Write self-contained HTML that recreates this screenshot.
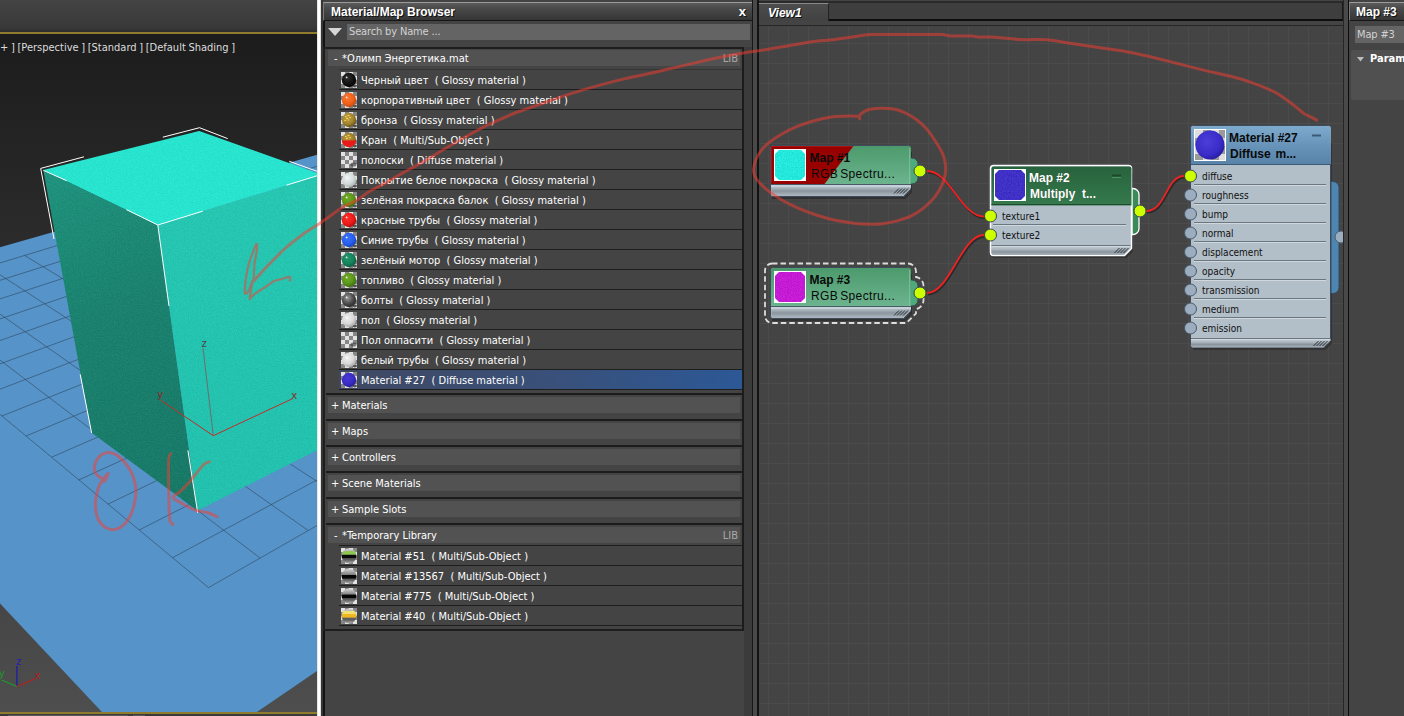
<!DOCTYPE html><html><head><meta charset="utf-8"><title>Material Editor</title><style>
html,body{margin:0;padding:0}
body{width:1404px;height:716px;overflow:hidden;background:#444;position:relative;font-family:'DejaVu Sans Condensed','Liberation Sans',sans-serif; font-size:11px;color:#fff}
div,span{box-sizing:border-box}
.abs{position:absolute}
.vtop{position:absolute;left:0;top:0;width:317px;height:32px;background:linear-gradient(#444 0,#3c3c3c 60%,#383838 88%,#2c2c2c 100%)}
.gold{position:absolute;left:0;width:317px;height:2px;background:#8f7a2e}
.vlab{position:absolute;left:0px;top:41px;white-space:pre;color:#dcdcdc;font-size:11px;line-height:14px;word-spacing:-0.5px}
.wbar{position:absolute;left:317px;top:0;width:4px;height:716px;background:linear-gradient(90deg,#d8d4cc,#fff 30%,#fff 70%,#cfcbc3)}
.bp{position:absolute;left:321px;top:0;width:436px;height:716px;background:#444}
.tb{position:absolute;height:20px;background:linear-gradient(#5c5c5c,#4a4a4a 30%,#363636 100%);border-top:1px solid #9a9a9a;border-left:1px solid #777;border-bottom:1px solid #161616;border-right:1px solid #222}
.tt{position:absolute;top:2px;font:bold 12px 'Liberation Sans',sans-serif;color:#fff;text-shadow:1px 1px 0 #111;white-space:pre}
.cx{position:absolute;right:6px;top:1px;font:bold 13px 'Liberation Sans',sans-serif;color:#fff;text-shadow:1px 1px 0 #111}
.sf{position:absolute;background:#646464;color:#d2d2d2;font-size:11px;line-height:15px}
.sf span{position:absolute;left:2px;top:0;white-space:pre;letter-spacing:-0.15px}
.lb{position:absolute;border:2px solid #1e1e1e;border-right-width:2px;background:#444}
.hd{position:absolute;left:7px;width:412px;height:16px;background:#525252;font-size:11px;line-height:17px}
.hd .pm{position:absolute;top:0}
.hd .ht{position:absolute;left:14px;top:0;white-space:pre}
.hd .lib{position:absolute;right:2px;top:0px;color:#a8a8a8;font-size:11px}
.rw{position:absolute;left:18px;width:403px;height:20px;border-top:1px solid #1e1e1e;line-height:19px}
.rw .ic{position:absolute;left:2px;top:2px}
.rw .rt{position:absolute;left:22px;top:1px;white-space:pre;font-size:11px}
.rw.r0{border-top-color:#353535}
.rw.sel{background:linear-gradient(90deg,#3f4862 0,#3a5078 50%,#2c5896 100%)}
.ln{position:absolute;left:18px;width:403px;height:1px;background:#1e1e1e}
.sl{position:absolute;left:5px;width:417px;height:2px;background:#1c1c1c}
</style></head><body>
<div class="vtop"></div><div class="gold" style="top:32px"></div>
<svg class="vp" width="317" height="678" viewBox="0 34 317 678" style="position:absolute;left:0;top:34px">
<defs><linearGradient id="bgg" x1="0" y1="0" x2="0" y2="1"><stop offset="0" stop-color="#1c1c1c"/><stop offset="1" stop-color="#4e4e4e"/></linearGradient>
<linearGradient id="lf" gradientUnits="userSpaceOnUse" x1="60" y1="180" x2="170" y2="480"><stop offset="0" stop-color="#1c937d"/><stop offset="0.4" stop-color="#17836f"/><stop offset="1" stop-color="#147a67"/></linearGradient>
<linearGradient id="rf" x1="0" y1="0" x2="0" y2="1"><stop offset="0" stop-color="#23cab4"/><stop offset="1" stop-color="#1fc4b0"/></linearGradient>
<filter id="nz" x="0" y="0" width="100%" height="100%" color-interpolation-filters="sRGB"><feTurbulence type="fractalNoise" baseFrequency="0.75" numOctaves="2" seed="7"/><feColorMatrix type="matrix" values="1.3 1.3 1.3 0 -1.45  1.3 1.3 1.3 0 -1.45  1.3 1.3 1.3 0 -1.45  0 0 0 0 1"/></filter>
<clipPath id="bx"><polygon points="43.3,170.1 199.2,131 321.6,174.6 345,436.2 197.5,510.6 91.3,432.4"/></clipPath>
<clipPath id="fl"><polygon points="0,247.2 52.5,232.3 290,162.5 317,154.8 330,150 330,662 256.2,712.5 102.4,712.5 0,603.5"/></clipPath></defs>
<rect x="0" y="34" width="317" height="678" fill="url(#bgg)"/>
<polygon points="0,247.2 52.5,232.3 290,162.5 317,154.8 330,150 330,662 256.2,712.5 102.4,712.5 0,603.5" fill="#5593c8"/>
<path d="M208.6 587.6L702.3 304.9M172.6 557.7L666.3 291.8M139.2 530L632.1 279.3M108 504.1L599.4 267.4M78.9 479.9L568.2 256.1M51.6 457.2L538.4 245.2M26 436L509.9 234.8M1.9 416L482.5 224.9M-20.8 397.1L456.3 215.4M-42.2 379.3L431.2 206.2M-62.4 362.5L407.1 197.4M-81.6 346.6L383.9 189M-99.8 331.5L361.6 180.9M-117 317.2L340.1 173.1M-133.4 303.6L319.4 165.6M208.6 587.6L-133.4 303.6M260.1 558L-91.2 290.7M308.2 530.5L-50.8 278.4M353 504.9L-12.3 266.7M395 480.8L24.5 255.4M434.3 458.3L59.7 244.7M471.3 437.1L93.4 234.4M506.1 417.2L125.8 224.6M538.9 398.4L156.8 215.1M569.9 380.7L186.6 206M599.2 363.9L215.2 197.3M627 348L242.8 188.9M653.4 332.9L269.3 180.8M678.4 318.5L294.8 173.1M702.3 304.9L319.4 165.6" stroke="#2c4258" stroke-opacity="0.7" stroke-width="0.8" fill="none" clip-path="url(#fl)"/>
<polygon points="43.3,170.1 157.8,225 197.5,510.6 91.3,432.4" fill="url(#lf)"/>
<polygon points="157.8,225 321.6,174.6 345,436.2 197.5,510.6" fill="url(#rf)"/>
<polygon points="43.3,170.1 199.2,131 321.6,174.6 157.8,225" fill="#25e8d1"/>
<g clip-path="url(#bx)" opacity="0.045"><rect x="0" y="125" width="317" height="390" filter="url(#nz)"/></g>
<path d="M84 156.8L40.7 168.4L54 239M43.3 170.3L66.7 180.7M162.8 137.2L199.5 127.7L227.7 138.6M126.4 209.6L157.8 225L202.6 211.2M157.8 225L169 306M286.4 185.2L317 175.8M289.3 161.3L317 171.3M80.2 374.4L91.6 433M187.9 450.3L197.7 512.9" stroke="#fff" stroke-width="1" fill="none"/>
<path d="M213.3 435.7L203 348" stroke="#6d6d6d" stroke-width="1" fill="none"/>
<path d="M160.8 400.3L213.3 435.7L292.2 398.8" stroke="#c22d28" stroke-width="1" fill="none"/>
<text x="201.5" y="347" font-size="11" fill="#4a4545" font-family="'Liberation Sans',sans-serif">z</text>
<text x="291.5" y="399" font-size="11" fill="#8a2828" font-family="'Liberation Sans',sans-serif">x</text>
<text x="157.5" y="398" font-size="11" fill="#8a2828" font-family="'Liberation Sans',sans-serif">y</text>
<path d="M16.9 686.5L16.9 666" stroke="#1c1ca8" stroke-width="1.3" fill="none"/>
<path d="M16.9 686.5L35.5 678.5" stroke="#b82020" stroke-width="1.3" fill="none"/>
<path d="M16.9 686.5L1.5 680" stroke="#1e9a2a" stroke-width="1.3" fill="none"/>
<text x="16" y="665" font-size="11" fill="#2222b0" font-family="'Liberation Sans',sans-serif">z</text>
<text x="34.5" y="679" font-size="11" fill="#b02020" font-family="'Liberation Sans',sans-serif">x</text>
<text x="-1" y="677" font-size="11" fill="#1e9a2a" font-family="'Liberation Sans',sans-serif">y</text>
</svg>
<div class="vlab">+ ] [Perspective ] [Standard ] [Default Shading ]</div>
<div class="gold" style="top:712px"></div>
<div class="abs" style="left:0;top:714px;width:317px;height:2px;background:#3a3a3a"></div><div class="abs" style="left:8px;top:715px;width:120px;height:1px;background:#5a5a5a"></div><div class="abs" style="left:133px;top:715px;width:12px;height:1px;background:#5a5a5a"></div>
<div class="wbar"></div>
<div class="bp">
<div class="tb" style="left:2px;top:2px;width:430px;height:19px"><span class="tt" style="left:7px">Material/Map Browser</span><span class="cx">x</span></div>
<svg style="position:absolute;left:7px;top:28px" width="14" height="8"><path d="M0 0h14l-7 8z" fill="#d6d6d6"/></svg>
<div class="sf" style="left:26px;top:24px;width:403px;height:16px"><span>Search by Name ...</span></div>
<div class="abs" style="left:0;top:0;width:2px;height:716px;background:#363636"></div><div class="abs" style="left:2px;top:21px;width:2px;height:695px;background:#141414"></div><div class="lb" style="left:2px;top:47px;width:422px;height:584px"></div>
<div class="hd" style="top:50px"><span class="pm" style="left:6px">-</span><span class="ht">*Олимп Энергетика.mat</span><span class="lib">LIB</span></div>
<div class="rw r0" style="top:69px"><svg class="ic" width="16" height="16" viewBox="0 0 16 16"><rect width="16" height="16" fill="#868686"/><path d="M0 0h4v4h-4zM8 0h4v4h-4zM4 4h4v4h-4zM12 4h4v4h-4zM0 8h4v4h-4zM8 8h4v4h-4zM4 12h4v4h-4zM12 12h4v4h-4z" fill="#e2e2e2"/><ellipse cx="13.8" cy="14" rx="2.2" ry="1.4" fill="#1a1a1a" fill-opacity="0.7"/><defs><radialGradient id="g0" cx="0.4" cy="0.36" r="0.68"><stop offset="0" stop-color="#2e2e2e"/><stop offset="0.6" stop-color="#121212"/><stop offset="1" stop-color="#040404"/></radialGradient></defs><circle cx="8" cy="8" r="7.2" fill="url(#g0)"/><circle cx="5.6" cy="5.4" r="0.9" fill="#fff" fill-opacity="0.9"/></svg><span class="rt">Черный цвет  ( Glossy material )</span></div>
<div class="rw" style="top:89px"><svg class="ic" width="16" height="16" viewBox="0 0 16 16"><rect width="16" height="16" fill="#868686"/><path d="M0 0h4v4h-4zM8 0h4v4h-4zM4 4h4v4h-4zM12 4h4v4h-4zM0 8h4v4h-4zM8 8h4v4h-4zM4 12h4v4h-4zM12 12h4v4h-4z" fill="#e2e2e2"/><ellipse cx="13.8" cy="14" rx="2.2" ry="1.4" fill="#1a1a1a" fill-opacity="0.7"/><defs><radialGradient id="g1" cx="0.4" cy="0.36" r="0.68"><stop offset="0" stop-color="#fa7a30"/><stop offset="0.6" stop-color="#f0601c"/><stop offset="1" stop-color="#c04810"/></radialGradient></defs><circle cx="8" cy="8" r="7.2" fill="url(#g1)"/><circle cx="5.6" cy="5.4" r="0.9" fill="#fff" fill-opacity="0.9"/></svg><span class="rt">корпоративный цвет  ( Glossy material )</span></div>
<div class="rw" style="top:109px"><svg class="ic" width="16" height="16" viewBox="0 0 16 16"><rect width="16" height="16" fill="#868686"/><path d="M0 0h4v4h-4zM8 0h4v4h-4zM4 4h4v4h-4zM12 4h4v4h-4zM0 8h4v4h-4zM8 8h4v4h-4zM4 12h4v4h-4zM12 12h4v4h-4z" fill="#e2e2e2"/><ellipse cx="13.8" cy="14" rx="2.2" ry="1.4" fill="#1a1a1a" fill-opacity="0.7"/><defs><radialGradient id="g2" cx="0.4" cy="0.36" r="0.7"><stop offset="0" stop-color="#c8a440"/><stop offset="0.6" stop-color="#a08430"/><stop offset="1" stop-color="#5e4a16"/></radialGradient></defs><circle cx="8" cy="8" r="7.2" fill="url(#g2)"/><path d="M4 4.500h1.500M6.500 3.500h2M5 6.500h2M8.500 5.500h1.500M3.500 8.500h1.500M7 8h1" stroke="#f0d860" stroke-width="1"/></svg><span class="rt">бронза  ( Glossy material )</span></div>
<div class="rw" style="top:129px"><svg class="ic" width="16" height="16" viewBox="0 0 16 16"><rect width="16" height="16" fill="#868686"/><path d="M0 0h4v4h-4zM8 0h4v4h-4zM4 4h4v4h-4zM12 4h4v4h-4zM0 8h4v4h-4zM8 8h4v4h-4zM4 12h4v4h-4zM12 12h4v4h-4z" fill="#e2e2e2"/><ellipse cx="13.8" cy="14" rx="2.2" ry="1.4" fill="#1a1a1a" fill-opacity="0.7"/><defs><radialGradient id="g3" cx="0.4" cy="0.36" r="0.7"><stop offset="0" stop-color="#c9a23c"/><stop offset="1" stop-color="#7b6120"/></radialGradient><clipPath id="g3c"><circle cx="8" cy="8" r="7.2"/></clipPath></defs><circle cx="8" cy="8" r="7.2" fill="url(#g3)"/><rect x="0" y="8.4" width="16" height="8" fill="#e81a1a" clip-path="url(#g3c)"/><path d="M4 4.500h1.500M6.500 3.500h2M5 6.500h1.500M8.500 5.500h1.500" stroke="#f0d860" stroke-width="1"/></svg><span class="rt">Кран  ( Multi/Sub-Object )</span></div>
<div class="rw" style="top:149px"><svg class="ic" width="16" height="16" viewBox="0 0 16 16"><rect width="16" height="16" fill="#868686"/><path d="M0 0h4v4h-4zM8 0h4v4h-4zM4 4h4v4h-4zM12 4h4v4h-4zM0 8h4v4h-4zM8 8h4v4h-4zM4 12h4v4h-4zM12 12h4v4h-4z" fill="#e2e2e2"/><ellipse cx="12.500" cy="12.500" rx="3" ry="2" fill="#333" fill-opacity="0.6"/></svg><span class="rt">полоски  ( Diffuse material )</span></div>
<div class="rw" style="top:169px"><svg class="ic" width="16" height="16" viewBox="0 0 16 16"><rect width="16" height="16" fill="#868686"/><path d="M0 0h4v4h-4zM8 0h4v4h-4zM4 4h4v4h-4zM12 4h4v4h-4zM0 8h4v4h-4zM8 8h4v4h-4zM4 12h4v4h-4zM12 12h4v4h-4z" fill="#e2e2e2"/><ellipse cx="13.8" cy="14" rx="2.2" ry="1.4" fill="#1a1a1a" fill-opacity="0.7"/><defs><radialGradient id="g5" cx="0.4" cy="0.36" r="0.68"><stop offset="0" stop-color="#eef2f2"/><stop offset="0.6" stop-color="#d4dada"/><stop offset="1" stop-color="#a8b0b0"/></radialGradient></defs><circle cx="8" cy="8" r="7.2" fill="url(#g5)"/><circle cx="5.6" cy="5.4" r="0.9" fill="#fff" fill-opacity="0.9"/></svg><span class="rt">Покрытие белое покраска  ( Glossy material )</span></div>
<div class="rw" style="top:189px"><svg class="ic" width="16" height="16" viewBox="0 0 16 16"><rect width="16" height="16" fill="#868686"/><path d="M0 0h4v4h-4zM8 0h4v4h-4zM4 4h4v4h-4zM12 4h4v4h-4zM0 8h4v4h-4zM8 8h4v4h-4zM4 12h4v4h-4zM12 12h4v4h-4z" fill="#e2e2e2"/><ellipse cx="13.8" cy="14" rx="2.2" ry="1.4" fill="#1a1a1a" fill-opacity="0.7"/><defs><radialGradient id="g6" cx="0.4" cy="0.36" r="0.68"><stop offset="0" stop-color="#74ac28"/><stop offset="0.6" stop-color="#5a961a"/><stop offset="1" stop-color="#3a6a0c"/></radialGradient></defs><circle cx="8" cy="8" r="7.2" fill="url(#g6)"/><circle cx="5.6" cy="5.4" r="0.9" fill="#fff" fill-opacity="0.9"/></svg><span class="rt">зелёная покраска балок  ( Glossy material )</span></div>
<div class="rw" style="top:209px"><svg class="ic" width="16" height="16" viewBox="0 0 16 16"><rect width="16" height="16" fill="#868686"/><path d="M0 0h4v4h-4zM8 0h4v4h-4zM4 4h4v4h-4zM12 4h4v4h-4zM0 8h4v4h-4zM8 8h4v4h-4zM4 12h4v4h-4zM12 12h4v4h-4z" fill="#e2e2e2"/><ellipse cx="13.8" cy="14" rx="2.2" ry="1.4" fill="#1a1a1a" fill-opacity="0.7"/><defs><radialGradient id="g7" cx="0.4" cy="0.36" r="0.68"><stop offset="0" stop-color="#fa3228"/><stop offset="0.6" stop-color="#ee1a1a"/><stop offset="1" stop-color="#b00a0a"/></radialGradient></defs><circle cx="8" cy="8" r="7.2" fill="url(#g7)"/><circle cx="5.6" cy="5.4" r="0.9" fill="#fff" fill-opacity="0.9"/></svg><span class="rt">красные трубы  ( Glossy material )</span></div>
<div class="rw" style="top:229px"><svg class="ic" width="16" height="16" viewBox="0 0 16 16"><rect width="16" height="16" fill="#868686"/><path d="M0 0h4v4h-4zM8 0h4v4h-4zM4 4h4v4h-4zM12 4h4v4h-4zM0 8h4v4h-4zM8 8h4v4h-4zM4 12h4v4h-4zM12 12h4v4h-4z" fill="#e2e2e2"/><ellipse cx="13.8" cy="14" rx="2.2" ry="1.4" fill="#1a1a1a" fill-opacity="0.7"/><defs><radialGradient id="g8" cx="0.4" cy="0.36" r="0.68"><stop offset="0" stop-color="#3a72fa"/><stop offset="0.6" stop-color="#2860ee"/><stop offset="1" stop-color="#1640b8"/></radialGradient></defs><circle cx="8" cy="8" r="7.2" fill="url(#g8)"/><circle cx="5.6" cy="5.4" r="0.9" fill="#fff" fill-opacity="0.9"/></svg><span class="rt">Синие трубы  ( Glossy material )</span></div>
<div class="rw" style="top:249px"><svg class="ic" width="16" height="16" viewBox="0 0 16 16"><rect width="16" height="16" fill="#868686"/><path d="M0 0h4v4h-4zM8 0h4v4h-4zM4 4h4v4h-4zM12 4h4v4h-4zM0 8h4v4h-4zM8 8h4v4h-4zM4 12h4v4h-4zM12 12h4v4h-4z" fill="#e2e2e2"/><ellipse cx="13.8" cy="14" rx="2.2" ry="1.4" fill="#1a1a1a" fill-opacity="0.7"/><defs><radialGradient id="g9" cx="0.4" cy="0.36" r="0.68"><stop offset="0" stop-color="#24966c"/><stop offset="0.6" stop-color="#16845c"/><stop offset="1" stop-color="#0a5a3c"/></radialGradient></defs><circle cx="8" cy="8" r="7.2" fill="url(#g9)"/><circle cx="5.6" cy="5.4" r="0.9" fill="#fff" fill-opacity="0.9"/></svg><span class="rt">зелёный мотор  ( Glossy material )</span></div>
<div class="rw" style="top:269px"><svg class="ic" width="16" height="16" viewBox="0 0 16 16"><rect width="16" height="16" fill="#868686"/><path d="M0 0h4v4h-4zM8 0h4v4h-4zM4 4h4v4h-4zM12 4h4v4h-4zM0 8h4v4h-4zM8 8h4v4h-4zM4 12h4v4h-4zM12 12h4v4h-4z" fill="#e2e2e2"/><ellipse cx="13.8" cy="14" rx="2.2" ry="1.4" fill="#1a1a1a" fill-opacity="0.7"/><defs><radialGradient id="g10" cx="0.4" cy="0.36" r="0.68"><stop offset="0" stop-color="#74ac28"/><stop offset="0.6" stop-color="#5a961a"/><stop offset="1" stop-color="#3a6a0c"/></radialGradient></defs><circle cx="8" cy="8" r="7.2" fill="url(#g10)"/><circle cx="5.6" cy="5.4" r="0.9" fill="#fff" fill-opacity="0.9"/></svg><span class="rt">топливо  ( Glossy material )</span></div>
<div class="rw" style="top:289px"><svg class="ic" width="16" height="16" viewBox="0 0 16 16"><rect width="16" height="16" fill="#868686"/><path d="M0 0h4v4h-4zM8 0h4v4h-4zM4 4h4v4h-4zM12 4h4v4h-4zM0 8h4v4h-4zM8 8h4v4h-4zM4 12h4v4h-4zM12 12h4v4h-4z" fill="#e2e2e2"/><ellipse cx="13.8" cy="14" rx="2.2" ry="1.4" fill="#1a1a1a" fill-opacity="0.7"/><defs><radialGradient id="g11" cx="0.4" cy="0.36" r="0.68"><stop offset="0" stop-color="#9a9a9a"/><stop offset="0.6" stop-color="#4a4a4a"/><stop offset="1" stop-color="#2a2a2a"/></radialGradient></defs><circle cx="8" cy="8" r="7.2" fill="url(#g11)"/><circle cx="5.6" cy="5.4" r="0.9" fill="#fff" fill-opacity="0.9"/></svg><span class="rt">болты  ( Glossy material )</span></div>
<div class="rw" style="top:309px"><svg class="ic" width="16" height="16" viewBox="0 0 16 16"><rect width="16" height="16" fill="#868686"/><path d="M0 0h4v4h-4zM8 0h4v4h-4zM4 4h4v4h-4zM12 4h4v4h-4zM0 8h4v4h-4zM8 8h4v4h-4zM4 12h4v4h-4zM12 12h4v4h-4z" fill="#e2e2e2"/><ellipse cx="13.8" cy="14" rx="2.2" ry="1.4" fill="#1a1a1a" fill-opacity="0.7"/><defs><radialGradient id="g12" cx="0.4" cy="0.36" r="0.68"><stop offset="0" stop-color="#f0f0f0"/><stop offset="0.6" stop-color="#d8d8d8"/><stop offset="1" stop-color="#a4a4a4"/></radialGradient></defs><circle cx="8" cy="8" r="7.2" fill="url(#g12)"/><circle cx="5.6" cy="5.4" r="0.9" fill="#fff" fill-opacity="0.9"/></svg><span class="rt">пол  ( Glossy material )</span></div>
<div class="rw" style="top:329px"><svg class="ic" width="16" height="16" viewBox="0 0 16 16"><rect width="16" height="16" fill="#868686"/><path d="M0 0h4v4h-4zM8 0h4v4h-4zM4 4h4v4h-4zM12 4h4v4h-4zM0 8h4v4h-4zM8 8h4v4h-4zM4 12h4v4h-4zM12 12h4v4h-4z" fill="#e2e2e2"/><ellipse cx="12.500" cy="12.500" rx="3" ry="2" fill="#333" fill-opacity="0.6"/></svg><span class="rt">Пол оппасити  ( Glossy material )</span></div>
<div class="rw" style="top:349px"><svg class="ic" width="16" height="16" viewBox="0 0 16 16"><rect width="16" height="16" fill="#868686"/><path d="M0 0h4v4h-4zM8 0h4v4h-4zM4 4h4v4h-4zM12 4h4v4h-4zM0 8h4v4h-4zM8 8h4v4h-4zM4 12h4v4h-4zM12 12h4v4h-4z" fill="#e2e2e2"/><ellipse cx="13.8" cy="14" rx="2.2" ry="1.4" fill="#1a1a1a" fill-opacity="0.7"/><defs><radialGradient id="g14" cx="0.4" cy="0.36" r="0.68"><stop offset="0" stop-color="#f0f0f0"/><stop offset="0.6" stop-color="#d8d8d8"/><stop offset="1" stop-color="#a4a4a4"/></radialGradient></defs><circle cx="8" cy="8" r="7.2" fill="url(#g14)"/><circle cx="5.6" cy="5.4" r="0.9" fill="#fff" fill-opacity="0.9"/></svg><span class="rt">белый трубы  ( Glossy material )</span></div>
<div class="rw sel" style="top:369px"><svg class="ic" width="16" height="16" viewBox="0 0 16 16"><rect width="16" height="16" fill="#868686"/><path d="M0 0h4v4h-4zM8 0h4v4h-4zM4 4h4v4h-4zM12 4h4v4h-4zM0 8h4v4h-4zM8 8h4v4h-4zM4 12h4v4h-4zM12 12h4v4h-4z" fill="#e2e2e2"/><ellipse cx="13.8" cy="14" rx="2.2" ry="1.4" fill="#1a1a1a" fill-opacity="0.7"/><defs><radialGradient id="g15" cx="0.4" cy="0.36" r="0.68"><stop offset="0" stop-color="#4a3ad4"/><stop offset="0.6" stop-color="#3a2cc4"/><stop offset="1" stop-color="#281c9c"/></radialGradient></defs><circle cx="8" cy="8" r="7.2" fill="url(#g15)"/></svg><span class="rt">Material #27  ( Diffuse material )</span></div>
<div class="ln" style="top:389px"></div>
<div class="sl" style="top:393px"></div>
<div class="hd" style="top:397px"><span class="pm" style="left:3px">+</span><span class="ht">Materials</span></div>
<div class="sl" style="top:419px"></div>
<div class="hd" style="top:423px"><span class="pm" style="left:3px">+</span><span class="ht">Maps</span></div>
<div class="sl" style="top:445px"></div>
<div class="hd" style="top:449px"><span class="pm" style="left:3px">+</span><span class="ht">Controllers</span></div>
<div class="sl" style="top:471px"></div>
<div class="hd" style="top:475px"><span class="pm" style="left:3px">+</span><span class="ht">Scene Materials</span></div>
<div class="sl" style="top:497px"></div>
<div class="hd" style="top:501px"><span class="pm" style="left:3px">+</span><span class="ht">Sample Slots</span></div>
<div class="sl" style="top:523px"></div>
<div class="hd" style="top:527px"><span class="pm" style="left:6px">-</span><span class="ht">*Temporary Library</span><span class="lib">LIB</span></div>
<div class="rw" style="top:545px"><svg class="ic" width="16" height="16" viewBox="0 0 16 16"><rect width="16" height="16" fill="#868686"/><path d="M0 0h4v4h-4zM8 0h4v4h-4zM4 4h4v4h-4zM12 4h4v4h-4zM0 8h4v4h-4zM8 8h4v4h-4zM4 12h4v4h-4zM12 12h4v4h-4z" fill="#e2e2e2"/><defs><linearGradient id="g16" x1="0" y1="0" x2="0" y2="1"><stop offset="0" stop-color="#d8d8d8"/><stop offset="0.5" stop-color="#6a6a6a"/><stop offset="0.75" stop-color="#5a5a5a"/><stop offset="1" stop-color="#b0b0b0"/></linearGradient><clipPath id="g16c"><circle cx="8" cy="8" r="7.4"/></clipPath></defs><circle cx="8" cy="8" r="7.4" fill="url(#g16)"/><g clip-path="url(#g16c)"><rect x="0" y="3.2" width="16" height="3.6" fill="#8cc850"/><rect x="0" y="6.8" width="16" height="3.4" fill="#0a0a0a"/></g></svg><span class="rt">Material #51  ( Multi/Sub-Object )</span></div>
<div class="rw" style="top:565px"><svg class="ic" width="16" height="16" viewBox="0 0 16 16"><rect width="16" height="16" fill="#868686"/><path d="M0 0h4v4h-4zM8 0h4v4h-4zM4 4h4v4h-4zM12 4h4v4h-4zM0 8h4v4h-4zM8 8h4v4h-4zM4 12h4v4h-4zM12 12h4v4h-4z" fill="#e2e2e2"/><defs><linearGradient id="g17" x1="0" y1="0" x2="0" y2="1"><stop offset="0" stop-color="#d8d8d8"/><stop offset="0.5" stop-color="#6a6a6a"/><stop offset="0.75" stop-color="#5a5a5a"/><stop offset="1" stop-color="#b0b0b0"/></linearGradient><clipPath id="g17c"><circle cx="8" cy="8" r="7.4"/></clipPath></defs><circle cx="8" cy="8" r="7.4" fill="url(#g17)"/><g clip-path="url(#g17c)"><rect x="0" y="7" width="16" height="3.6" fill="#050505"/></g></svg><span class="rt">Material #13567  ( Multi/Sub-Object )</span></div>
<div class="rw" style="top:585px"><svg class="ic" width="16" height="16" viewBox="0 0 16 16"><rect width="16" height="16" fill="#868686"/><path d="M0 0h4v4h-4zM8 0h4v4h-4zM4 4h4v4h-4zM12 4h4v4h-4zM0 8h4v4h-4zM8 8h4v4h-4zM4 12h4v4h-4zM12 12h4v4h-4z" fill="#e2e2e2"/><defs><linearGradient id="g18" x1="0" y1="0" x2="0" y2="1"><stop offset="0" stop-color="#d8d8d8"/><stop offset="0.5" stop-color="#6a6a6a"/><stop offset="0.75" stop-color="#5a5a5a"/><stop offset="1" stop-color="#b0b0b0"/></linearGradient><clipPath id="g18c"><circle cx="8" cy="8" r="7.4"/></clipPath></defs><circle cx="8" cy="8" r="7.4" fill="url(#g18)"/><g clip-path="url(#g18c)"><rect x="0" y="6.6" width="16" height="3.6" fill="#050505"/></g></svg><span class="rt">Material #775  ( Multi/Sub-Object )</span></div>
<div class="rw" style="top:605px"><svg class="ic" width="16" height="16" viewBox="0 0 16 16"><rect width="16" height="16" fill="#868686"/><path d="M0 0h4v4h-4zM8 0h4v4h-4zM4 4h4v4h-4zM12 4h4v4h-4zM0 8h4v4h-4zM8 8h4v4h-4zM4 12h4v4h-4zM12 12h4v4h-4z" fill="#e2e2e2"/><defs><linearGradient id="g19" x1="0" y1="0" x2="0" y2="1"><stop offset="0" stop-color="#d8d8d8"/><stop offset="0.5" stop-color="#6a6a6a"/><stop offset="0.75" stop-color="#5a5a5a"/><stop offset="1" stop-color="#b0b0b0"/></linearGradient><clipPath id="g19c"><circle cx="8" cy="8" r="7.4"/></clipPath></defs><circle cx="8" cy="8" r="7.4" fill="url(#g19)"/><g clip-path="url(#g19c)"><rect x="0" y="3" width="16" height="3" fill="#f2e070"/><rect x="0" y="6" width="16" height="3.6" fill="#f0b820"/></g></svg><span class="rt">Material #40  ( Multi/Sub-Object )</span></div>
<div class="ln" style="top:625px"></div>
</div>
<div class="abs" style="left:742px;top:47px;width:2px;height:583px;background:#1c1c1c"></div>
<div class="abs" style="left:744px;top:47px;width:8px;height:669px;background:#3b3b3b"></div>
<div class="abs" style="left:752px;top:0;width:1px;height:716px;background:#161616"></div>
<div class="abs" style="left:753px;top:0;width:4px;height:716px;background:#494949"></div>
<div class="abs" style="left:757px;top:0;width:2px;height:716px;background:#121212"></div>
<div class="abs" style="left:759px;top:0;width:584px;height:26px;background:#444"></div>
<div class="abs" style="left:759px;top:2px;width:584px;height:20px;background:#3e3e3e;border-top:2px solid #2a2a2a;border-right:1px solid #1a1a1a;border-bottom:2px solid #0e0e0e;margin-top:-1px"></div>
<div class="abs" style="left:759px;top:3px;width:70px;height:18px;background:linear-gradient(#4c4c4c,#424242);border-top:1px solid #8a8a8a;border-right:1px solid #222"><span style="position:absolute;left:9px;top:2px;font:italic bold 12px 'Liberation Sans',sans-serif;color:#fff;text-shadow:1px 1px 0 #111">View1</span></div>
<div class="abs" style="left:759px;top:25px;width:584px;height:1px;background:#262626"></div>
<svg style="position:absolute;left:757px;top:0" width="591" height="716" viewBox="757 0 591 716">
<defs><linearGradient id="gh" x1="0" y1="0" x2="0" y2="1"><stop offset="0" stop-color="#4c9a6c"/><stop offset="1" stop-color="#6cb48e"/></linearGradient><linearGradient id="gf" x1="0" y1="0" x2="0" y2="1"><stop offset="0" stop-color="#bcc8d0"/><stop offset="0.3" stop-color="#aab4bc"/><stop offset="0.6" stop-color="#8a949c"/><stop offset="1" stop-color="#a8b2ba"/></linearGradient><linearGradient id="gd" x1="0" y1="0" x2="0" y2="1"><stop offset="0" stop-color="#27623c"/><stop offset="1" stop-color="#367a4e"/></linearGradient><linearGradient id="gb" x1="0" y1="0" x2="0" y2="1"><stop offset="0" stop-color="#7eaacc"/><stop offset="0.5" stop-color="#6894ba"/><stop offset="1" stop-color="#5882a8"/></linearGradient><radialGradient id="gs" cx="0.4" cy="0.38" r="0.65"><stop offset="0" stop-color="#4c3ed8"/><stop offset="0.7" stop-color="#3a2cc8"/><stop offset="1" stop-color="#281ca2"/></radialGradient><filter id="nz2" x="0" y="0" width="100%" height="100%" color-interpolation-filters="sRGB"><feTurbulence type="fractalNoise" baseFrequency="0.8" numOctaves="2" seed="11"/><feColorMatrix type="matrix" values="1.3 1.3 1.3 0 -1.45  1.3 1.3 1.3 0 -1.45  1.3 1.3 1.3 0 -1.45  0 0 0 0 1"/></filter><pattern id="grid" x="768" y="3" width="20" height="20" patternUnits="userSpaceOnUse"><path d="M0.5 0v20M0 0.5h20" stroke="#4b4b4b" stroke-width="1" fill="none"/></pattern></defs>
<rect x="759" y="26" width="584" height="690" fill="#444"/>
<rect x="759" y="26" width="584" height="690" fill="url(#grid)"/>
<path d="M927 171C950 171 961 216.5 984 216.5" transform="translate(1,1.5)" stroke="#2a2a2a" stroke-width="2" fill="none"/>
<path d="M927 171C950 171 961 216.5 984 216.5" stroke="#ee2222" stroke-width="1.8" fill="none"/>
<path d="M927 293C950 293 961 235 984 235" transform="translate(1,1.5)" stroke="#2a2a2a" stroke-width="2" fill="none"/>
<path d="M927 293C950 293 961 235 984 235" stroke="#ee2222" stroke-width="1.8" fill="none"/>
<path d="M1146 211C1166 211 1166 176 1184 176" transform="translate(1,1.5)" stroke="#2a2a2a" stroke-width="2" fill="none"/>
<path d="M1146 211C1166 211 1166 176 1184 176" stroke="#ee2222" stroke-width="1.8" fill="none"/>
<path d="M772 198h133l6 -6v-40" stroke="#222" stroke-opacity="0.55" stroke-width="2" fill="none"/>
<path d="M910 158h2a6 6 0 0 1 6 6v14a6 6 0 0 1 -6 6h-2z" fill="#4eaa7a" stroke="#3a4a55" stroke-width="1"/>
<path d="M770.5 148.5a3 3 0 0 1 3 -3h134a3 3 0 0 1 3 3v41l-7 7h-131a2 2 0 0 1 -2 -2z" fill="#a9b4bd" stroke="#3d4b5a" stroke-width="1"/>
<path d="M771 148a2 2 0 0 1 2 -2h136a2 2 0 0 1 2 2v36h-140z" fill="url(#gh)"/>
<path d="M909.5 148v36" stroke="#86c4a0" stroke-opacity="0.7" stroke-width="1"/>
<polygon points="771,146 853.5,146 824.5,184 771,184" fill="#990000"/>
<path d="M771 146.5h82M771.5 146v37" stroke="#b01010" stroke-width="1" fill="none"/>
<path d="M771 184.5h140" stroke="#4a5a68" stroke-width="1"/>
<path d="M771 185h140v3l-7 7h-132z" fill="url(#gf)"/>
<path d="M771 186h140" stroke="#c6d0d8" stroke-width="2"/>
<path d="M908 188.5l-5 5M905 188.5l-5 5M902 188.5l-5 5M899 188.5l-5 5" stroke="#2a3036" stroke-width="1" fill="none"/>
<rect x="774" y="149" width="32" height="32" fill="#fff"/>
<polygon points="779,150 801,150 805,154 805,176 801,180 779,180 775,176 775,154" fill="#1ef0e2"/><clipPath id="oc5575"><polygon points="779,150 801,150 805,154 805,176 801,180 779,180 775,176 775,154"/></clipPath><rect x="775" y="150" width="30" height="30" filter="url(#nz2)" opacity="0.07" clip-path="url(#oc5575)"/>
<text x="809.5" y="161.5" font-size="12" font-weight="bold" fill="#0a0a0a" font-family="'Liberation Sans',sans-serif">Map #1</text>
<text x="811" y="177.5" font-size="12" fill="#0a0a0a" font-family="'Liberation Sans',sans-serif" letter-spacing="0.35" word-spacing="-1.5">RGB Spectru...</text>
<circle cx="920" cy="171" r="6" fill="#ccff00" stroke="#3a4652" stroke-width="1"/>
<path d="M772 263.5h136a8 8 0 0 1 8 8v5.5a9 9 0 0 1 7.5 9v14a9 9 0 0 1 -7.5 9v4.5l-9.5 9.500h-134.500a7 7 0 0 1 -7 -7v-45.500a7 7 0 0 1 7 -7z" stroke="#dcdcdc" stroke-width="1.8" stroke-dasharray="5.500 3" fill="none"/>
<path d="M772 320h133l6 -6v-40" stroke="#222" stroke-opacity="0.55" stroke-width="2" fill="none"/>
<path d="M910 280h2a6 6 0 0 1 6 6v14a6 6 0 0 1 -6 6h-2z" fill="#4eaa7a" stroke="#3a4a55" stroke-width="1"/>
<path d="M770.5 270.5a3 3 0 0 1 3 -3h134a3 3 0 0 1 3 3v41l-7 7h-131a2 2 0 0 1 -2 -2z" fill="#a9b4bd" stroke="#3d4b5a" stroke-width="1"/>
<path d="M771 270a2 2 0 0 1 2 -2h136a2 2 0 0 1 2 2v36h-140z" fill="url(#gh)"/>
<path d="M909.5 270v36" stroke="#86c4a0" stroke-opacity="0.7" stroke-width="1"/>
<path d="M771 306.5h140" stroke="#4a5a68" stroke-width="1"/>
<path d="M771 307h140v3l-7 7h-132z" fill="url(#gf)"/>
<path d="M771 308h140" stroke="#c6d0d8" stroke-width="2"/>
<path d="M908 310.5l-5 5M905 310.5l-5 5M902 310.5l-5 5M899 310.5l-5 5" stroke="#2a3036" stroke-width="1" fill="none"/>
<rect x="774" y="271" width="32" height="32" fill="#fff"/>
<polygon points="779,272 801,272 805,276 805,298 801,302 779,302 775,298 775,276" fill="#cc14dc"/><clipPath id="oc5697"><polygon points="779,272 801,272 805,276 805,298 801,302 779,302 775,298 775,276"/></clipPath><rect x="775" y="272" width="30" height="30" filter="url(#nz2)" opacity="0.07" clip-path="url(#oc5697)"/>
<text x="809.5" y="283.5" font-size="12" font-weight="bold" fill="#0a0a0a" font-family="'Liberation Sans',sans-serif">Map #3</text>
<text x="811" y="299.5" font-size="12" fill="#0a0a0a" font-family="'Liberation Sans',sans-serif" letter-spacing="0.35" word-spacing="-1.5">RGB Spectru...</text>
<circle cx="920" cy="293" r="6" fill="#ccff00" stroke="#3a4652" stroke-width="1"/>
<path d="M993 257h133l6 -6v-78" stroke="#222" stroke-opacity="0.5" stroke-width="2" fill="none"/>
<path d="M1132 188.500h1a6 6 0 0 1 6 6v34a6 6 0 0 1 -6 6h-1z" fill="#3a8a5a" stroke="#fff" stroke-width="1.3"/>
<path d="M990.5 168.5a3 3 0 0 1 3 -3h135a3 3 0 0 1 3 3v80l-7 7h-131a3 3 0 0 1 -3 -3z" fill="#b2bec8" stroke="#fff" stroke-width="1.5"/>
<path d="M991.5 168.5a2 2 0 0 1 2 -2h136a2 2 0 0 1 2 2v37h-140z" fill="url(#gd)"/>
<path d="M991.500 204.500h139" stroke="#1e4a2e" stroke-width="1"/>
<path d="M993 224.5h133" stroke="#6a7680" stroke-width="1"/><path d="M993 225.5h133" stroke="#d0d8de" stroke-width="1"/>
<path d="M991.5 245.5h139" stroke="#6a7680" stroke-width="1"/><path d="M991.5 246.5h139" stroke="#d0d8de" stroke-width="1"/>
<path d="M991.500 247h139v1l-7 7h-130a2 2 0 0 1 -2 -2z" fill="url(#gf)"/>
<path d="M1128.5 248l-5 5M1125.5 248l-5 5M1122.5 248l-5 5M1119.5 248l-5 5" stroke="#2a3036" stroke-width="1" fill="none"/>
<rect x="994" y="169" width="32" height="32" fill="#fff"/>
<polygon points="999,170 1021,170 1025,174 1025,196 1021,200 999,200 995,196 995,174" fill="#3c2ccc"/><clipPath id="oc7135"><polygon points="999,170 1021,170 1025,174 1025,196 1021,200 999,200 995,196 995,174"/></clipPath><rect x="995" y="170" width="30" height="30" filter="url(#nz2)" opacity="0.07" clip-path="url(#oc7135)"/>
<text x="1029.500" y="182" font-size="12" font-weight="bold" fill="#1a2a1e" fill-opacity="0.6" font-family="'Liberation Sans',sans-serif">Map #2</text>
<text x="1029" y="181.500" font-size="12" font-weight="bold" fill="#fff" font-family="'Liberation Sans',sans-serif">Map #2</text>
<text x="1030.500" y="198" font-size="12" font-weight="bold" fill="#1a2a1e" fill-opacity="0.6" font-family="'Liberation Sans',sans-serif" xml:space="preserve">Multiply  t...</text>
<text x="1030" y="197.500" font-size="12" font-weight="bold" fill="#fff" font-family="'Liberation Sans',sans-serif" xml:space="preserve">Multiply  t...</text>
<path d="M1112 175.500h9" stroke="#1c4a2c" stroke-width="2"/><path d="M1112 177.500h9" stroke="#4c9468" stroke-width="1"/>
<text x="1002" y="219.500" font-size="10" fill="#101010" font-family="'DejaVu Sans Condensed','Liberation Sans',sans-serif">texture1</text>
<text x="1002" y="238.500" font-size="10" fill="#101010" font-family="'DejaVu Sans Condensed','Liberation Sans',sans-serif">texture2</text>
<circle cx="990.500" cy="216" r="6" fill="#ccff00" stroke="#3a4652" stroke-width="1"/>
<circle cx="990.500" cy="235" r="6" fill="#ccff00" stroke="#3a4652" stroke-width="1"/>
<circle cx="1140" cy="211" r="6" fill="#ccff00" stroke="#3a4652" stroke-width="1"/>
<path d="M1193 349h132l6 -6v-200" stroke="#222" stroke-opacity="0.5" stroke-width="2" fill="none"/>
<path d="M1331 181.500h2a6 6 0 0 1 6 6v100a6 6 0 0 1 -6 6h-2z" fill="#4e86b2" stroke="#34485a" stroke-width="1"/>
<circle cx="1341" cy="237" r="6" fill="#9cadbf" stroke="#4a5a6a" stroke-width="1"/>
<path d="M1190.5 128.5a3 3 0 0 1 3 -3h134a3 3 0 0 1 3 3v212l-7 7h-130a3 3 0 0 1 -3 -3z" fill="#b2bec8" stroke="#3d4b5a" stroke-width="1"/>
<path d="M1191 128a2 2 0 0 1 2 -2h136a2 2 0 0 1 2 2v36.500h-140z" fill="url(#gb)"/>
<path d="M1191 164.500h140" stroke="#3a5a78" stroke-width="1"/>
<text x="1202" y="179.5" font-size="10" fill="#101010" font-family="'DejaVu Sans Condensed','Liberation Sans',sans-serif">diffuse</text>
<path d="M1194 184.5h132" stroke="#6a7680" stroke-width="1"/><path d="M1194 185.5h132" stroke="#d0d8de" stroke-width="1"/>
<circle cx="1190.500" cy="176" r="6" fill="#ccff00" stroke="#3a4652" stroke-width="1"/>
<text x="1202" y="198.5" font-size="10" fill="#101010" font-family="'DejaVu Sans Condensed','Liberation Sans',sans-serif">roughness</text>
<path d="M1194 203.5h132" stroke="#6a7680" stroke-width="1"/><path d="M1194 204.5h132" stroke="#d0d8de" stroke-width="1"/>
<circle cx="1190.500" cy="195" r="6" fill="#9cadbf" stroke="#4a5a6a" stroke-width="1"/>
<text x="1202" y="217.5" font-size="10" fill="#101010" font-family="'DejaVu Sans Condensed','Liberation Sans',sans-serif">bump</text>
<path d="M1194 222.5h132" stroke="#6a7680" stroke-width="1"/><path d="M1194 223.5h132" stroke="#d0d8de" stroke-width="1"/>
<circle cx="1190.500" cy="214" r="6" fill="#9cadbf" stroke="#4a5a6a" stroke-width="1"/>
<text x="1202" y="236.5" font-size="10" fill="#101010" font-family="'DejaVu Sans Condensed','Liberation Sans',sans-serif">normal</text>
<path d="M1194 241.5h132" stroke="#6a7680" stroke-width="1"/><path d="M1194 242.5h132" stroke="#d0d8de" stroke-width="1"/>
<circle cx="1190.500" cy="233" r="6" fill="#9cadbf" stroke="#4a5a6a" stroke-width="1"/>
<text x="1202" y="255.5" font-size="10" fill="#101010" font-family="'DejaVu Sans Condensed','Liberation Sans',sans-serif">displacement</text>
<path d="M1194 260.5h132" stroke="#6a7680" stroke-width="1"/><path d="M1194 261.5h132" stroke="#d0d8de" stroke-width="1"/>
<circle cx="1190.500" cy="252" r="6" fill="#9cadbf" stroke="#4a5a6a" stroke-width="1"/>
<text x="1202" y="274.5" font-size="10" fill="#101010" font-family="'DejaVu Sans Condensed','Liberation Sans',sans-serif">opacity</text>
<path d="M1194 279.5h132" stroke="#6a7680" stroke-width="1"/><path d="M1194 280.5h132" stroke="#d0d8de" stroke-width="1"/>
<circle cx="1190.500" cy="271" r="6" fill="#9cadbf" stroke="#4a5a6a" stroke-width="1"/>
<text x="1202" y="293.5" font-size="10" fill="#101010" font-family="'DejaVu Sans Condensed','Liberation Sans',sans-serif">transmission</text>
<path d="M1194 298.5h132" stroke="#6a7680" stroke-width="1"/><path d="M1194 299.5h132" stroke="#d0d8de" stroke-width="1"/>
<circle cx="1190.500" cy="290" r="6" fill="#9cadbf" stroke="#4a5a6a" stroke-width="1"/>
<text x="1202" y="312.5" font-size="10" fill="#101010" font-family="'DejaVu Sans Condensed','Liberation Sans',sans-serif">medium</text>
<path d="M1194 317.5h132" stroke="#6a7680" stroke-width="1"/><path d="M1194 318.5h132" stroke="#d0d8de" stroke-width="1"/>
<circle cx="1190.500" cy="309" r="6" fill="#9cadbf" stroke="#4a5a6a" stroke-width="1"/>
<text x="1202" y="331.5" font-size="10" fill="#101010" font-family="'DejaVu Sans Condensed','Liberation Sans',sans-serif">emission</text>
<path d="M1191 338.5h139.5" stroke="#6a7680" stroke-width="1"/><path d="M1191 339.5h139.5" stroke="#d0d8de" stroke-width="1"/>
<circle cx="1190.500" cy="328" r="6" fill="#9cadbf" stroke="#4a5a6a" stroke-width="1"/>
<path d="M1191 340h139.500v0.500l-7 7h-130.500a2 2 0 0 1 -2 -2z" fill="url(#gf)"/>
<path d="M1327.5 341l-5 5M1324.5 341l-5 5M1321.5 341l-5 5M1318.5 341l-5 5" stroke="#2a3036" stroke-width="1" fill="none"/>
<rect x="1194" y="129" width="32" height="32" fill="#fff"/>
<path d="M1195 130h30v30h-30z" fill="#9a9a9a"/><path d="M1195 130h8v8h-8zM1211 130h8v8h-8zM1203 138h8v8h-8zM1219 138h6v8h-6zM1195 146h8v8h-8zM1211 146h8v8h-8zM1203 154h8v6h-8zM1219 154h6v6h-6z" fill="#dedede"/>
<circle cx="1210" cy="145" r="14.500" fill="url(#gs)"/>
<text x="1229" y="142" font-size="12" font-weight="bold" fill="#0a0a0a" font-family="'Liberation Sans',sans-serif">Material #27</text>
<text x="1230" y="158" font-size="12" font-weight="bold" fill="#0a0a0a" font-family="'Liberation Sans',sans-serif" word-spacing="1.5">Diffuse m...</text>
<path d="M1312 135.500h9" stroke="#3a5a78" stroke-width="2"/>
</svg>
<div class="abs" style="left:1343px;top:0;width:1px;height:716px;background:#262626"></div>
<div class="abs" style="left:1344px;top:0;width:4px;height:716px;background:#494949"></div>
<div class="abs" style="left:1348px;top:0;width:1px;height:716px;background:#0c0c0c"></div>
<div class="abs" style="left:1349px;top:0;width:55px;height:716px;background:#444"></div>
<div class="tb" style="left:1349px;top:2px;width:60px;height:19px"><span class="tt" style="left:6px">Map #3</span></div>
<div class="sf" style="left:1355px;top:26px;width:60px;height:17px"><span style="top:1px">Map #3</span></div>
<div class="abs" style="left:1351px;top:50px;width:60px;height:50px;background:#505050;border-radius:2px"></div>
<svg class="abs" style="left:1357px;top:57px" width="7" height="5"><path d="M0 0h7l-3.500 4.500z" fill="#bdbdbd"/></svg>
<div class="abs" style="left:1370px;top:52px;font:bold 11px 'DejaVu Sans Condensed','Liberation Sans',sans-serif;color:#fff;white-space:pre">Parameters</div>
<svg style="position:absolute;left:0;top:0;pointer-events:none" width="1404" height="716" viewBox="0 0 1404 716">
<g fill="none" stroke="#fa3c30" opacity="0.5" stroke-width="3" stroke-linecap="round" stroke-linejoin="round">
<path d="M253.6 281C255.9 278.6 262.2 271.6 267.3 266.3C272.4 261 278.6 254.3 284.5 249C290.4 243.7 296.6 238.9 302.6 234.5C308.7 230.1 314.1 227.2 320.8 222.7C327.5 218.1 336.6 211 342.6 207.2C348.7 203.4 352.5 202.7 357.1 200C361.7 197.3 365.5 193.7 370 191C374.5 188.3 379.6 186.2 384.3 183.6C389.1 181 391.4 179.3 398.5 175.3C405.6 171.3 417.5 165.1 427 159.6C436.5 154.1 446 147.9 455.5 142.5C465 137.1 474.5 131.7 484 126.9C493.5 122.2 503 117.8 512.5 114C522 110.2 531.5 107.3 541 104C550.5 100.7 559.9 97.2 569.4 94.1C578.9 91 588.5 88.2 598 85.6C607.5 83 616.9 80.6 626.4 78.4C635.9 76.2 645.5 74.3 655 72.2C664.5 70.1 673.9 67.8 683.4 65.6C692.9 63.4 702.4 61 711.9 59C721.4 57 731.2 55 740.4 53.4C749.6 51.8 759.1 50.7 767.3 49.4C775.5 48.1 781.7 46.8 789.8 45.4C797.9 44 808.6 42.1 815.8 41.2C823 40.3 826.8 40.5 833.1 39.8C839.5 39 847.5 37.6 853.9 36.7C860.2 35.8 862.6 35 871.2 34.6C879.9 34.2 894.2 34.6 905.8 34.6C917.3 34.6 933 34.4 940.5 34.6C948 34.8 945.7 35.8 950.9 36C956.1 36.2 967 35.8 971.6 36C976.2 36.2 975.1 36.9 978.6 37.1C982.1 37.3 985.7 36.6 992.5 37C999.3 37.4 1010.5 39 1019.5 39.5C1028.5 40 1038.5 39.2 1046.6 39.8C1054.7 40.4 1060.2 41.8 1068.3 43C1076.4 44.2 1085.4 45.6 1095.3 47.1C1105.2 48.6 1118.8 50.3 1127.8 51.9C1136.8 53.5 1141.3 54.6 1149.4 56.5C1157.5 58.4 1167.5 61 1176.5 63.3C1185.5 65.6 1194.6 67.9 1203.6 70.1C1212.6 72.3 1222.5 74.2 1230.6 76.3C1238.7 78.4 1245.1 80.2 1252.3 82.8C1259.5 85.4 1267.6 88.4 1273.9 91.7C1280.2 95 1285.2 98.9 1290.2 102.5C1295.2 106.1 1300.6 111.1 1303.7 113.4C1306.8 115.7 1306.9 115 1309.1 116.1C1311.3 117.2 1315.4 119.4 1316.7 120.1"/>
<path d="M859.8 118.9C859.7 118.4 858.8 116.8 859.4 115.6C860 114.4 861.9 113 863.6 112C865.4 111 866.8 109.9 869.9 109.3C873 108.7 878.3 108.2 882.5 108.2C886.7 108.2 891.2 108.5 895 109.3C898.8 110.1 902 111.3 905.5 113C909 114.7 912.5 116.7 916 119.3C919.5 121.9 923.4 125.3 926.5 128.8C929.6 132.3 932.2 136.3 934.8 140.3C937.4 144.3 940.5 149.1 942.2 152.9C944 156.7 944.8 159.8 945.3 163.3C945.8 166.8 945.8 170.3 945.3 173.8C944.8 177.3 944 180.5 942.2 184.3C940.5 188.2 937.8 193.1 934.8 196.9C931.8 200.7 928.2 204.2 924.4 207.3C920.6 210.4 916.3 213.4 911.8 215.7C907.2 218 902 219.6 897.1 220.9C892.2 222.2 887.7 223.2 882.5 223.7C877.3 224.2 871.3 224.3 865.7 224.1C860.1 223.9 854.5 223.2 848.9 222.4C843.3 221.6 837.8 220.8 832.2 219.5C826.6 218.2 821 216.5 815.4 214.7C809.8 212.8 804.3 210.8 798.7 208.4C793.1 206 786.8 202.8 781.9 200C777 197.2 773 194.4 769.3 191.6C765.6 188.8 762.3 185.8 759.9 183.2C757.5 180.6 755.8 178.3 754.7 175.9C753.7 173.5 753.4 171.2 753.6 168.6C753.8 166 754.5 163.2 755.7 160.2C756.9 157.2 758.6 153.8 760.9 150.8C763.2 147.8 765.8 145.2 769.3 142.4C772.8 139.6 777.3 136.6 781.9 134C786.5 131.4 791.4 128.9 796.6 126.7C801.8 124.5 807.7 122.6 813.3 121C818.9 119.4 824.9 118 830.1 117.2C835.4 116.4 840.1 116.4 844.8 116.2C849.5 116 856.1 116.2 858.4 116.2"/>
<path d="M108.1 473.5C107.5 474.8 105.6 480.4 104.6 481.2C103.5 482 103.1 479.4 101.8 478.4C100.5 477.3 98.1 476.4 96.9 474.9C95.7 473.4 94.7 471.4 94.5 469.3C94.3 467.2 94.6 464.6 95.5 462.4C96.4 460.2 98 457.7 99.7 456.1C101.5 454.5 103.8 453.4 106 452.9C108.2 452.4 110.6 452.5 112.9 453.3C115.2 454.1 117.6 455.5 119.9 457.5C122.2 459.5 124.8 462.3 126.9 465.2C129 468.1 131.1 471.4 132.5 474.9C133.9 478.4 135.1 482.6 135.6 486.1C136.1 489.6 135.9 492.6 135.6 495.9C135.3 499.2 134.8 502.4 133.9 505.7C133 509 131.9 512.5 130.4 515.5C128.9 518.5 126.9 521.6 124.8 523.8C122.7 526 120.2 527.8 117.8 528.7C115.4 529.6 112.6 529.9 110.2 529.4C107.8 528.9 105.2 527.5 103.2 525.9C101.2 524.3 99.5 522 98.3 519.6C97.1 517.2 96.4 514.3 95.9 511.3C95.4 508.3 95.3 504.5 95.5 501.5C95.7 498.5 96.2 495.9 96.9 493.1C97.6 490.3 98.5 487.1 99.7 484.7C100.9 482.2 102.5 480.3 103.9 478.4C105.3 476.5 107.4 474.3 108.1 473.5"/>
<path d="M170.9 453.7C170.6 454.4 169.2 454.7 168.8 458.2C168.4 461.7 168.6 468.6 168.6 474.9C168.6 481.2 168.7 489.6 168.8 495.9C168.9 502.2 169.1 508.5 169.3 512.7C169.5 516.9 169.4 519.1 170 521C170.6 522.9 172.5 523.8 173 524.3"/>
<path d="M209.4 461.7C208.5 462.2 205.9 462.6 203.8 464.5C201.7 466.4 199.4 469.7 196.8 472.8C194.2 475.9 191.2 480.2 188.4 483.3C185.6 486.4 182.6 489.4 180 491.7C177.4 494 173 495.6 173 497.3C173 499.1 177 500.3 180 502.2C183 504.1 187.9 507 191.2 508.5C194.5 510 196.8 510.6 199.6 511.3C202.4 512 205.1 511.8 208 512.7C210.9 513.6 215.5 516 217 516.6"/>
<path d="M253.6 281C253.8 278.2 253.9 269.5 254.5 264.3C255.1 259.1 256.7 253.1 257 249.7C257.3 246.3 257.1 243.7 256.5 243.8C255.9 244 254.9 247.2 253.6 250.6C252.3 254 250 259.6 248.7 264.3C247.4 269 246.5 274.3 245.8 279C245.2 283.7 244.6 290.4 244.8 292.7C245 295 246.4 293.4 247.2 292.7C248 292 249 289.8 249.7 288.3C250.3 286.8 250.6 285.1 251.1 283.9C251.6 282.7 252.7 279.7 252.6 281C252.5 282.3 251.1 288.7 250.6 291.7C250.1 294.7 249.4 298.4 249.7 299C250 299.6 251 297 252.6 295.6C254.2 294.2 256.9 292.3 259.4 290.7C261.8 289.1 264.9 287.4 267.3 285.8C269.8 284.2 271.7 282.1 274.1 281C276.5 279.9 279.5 279.7 281.9 279C284.3 278.3 286.9 277.2 288.3 277C289.7 276.8 289.9 276.9 290.2 277.5C290.5 278.1 290 280 290 280.5" stroke-width="2.300"/>
</g></svg>
</body></html>
